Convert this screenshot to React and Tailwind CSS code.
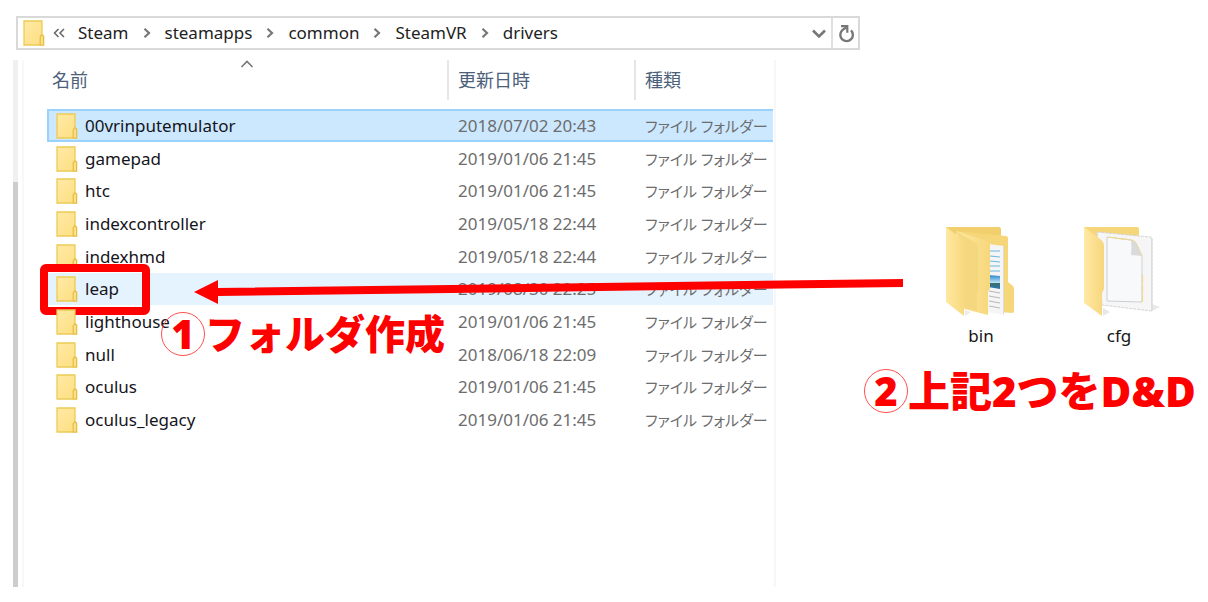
const folders = [
  { name: '00vrinputemulator', date: '2018/07/02 20:43', selected: true },
  { name: 'gamepad', date: '2019/01/06 21:45' },
  { name: 'htc', date: '2019/01/06 21:45' },
  { name: 'indexcontroller', date: '2019/05/18 22:44' },
  { name: 'indexhmd', date: '2019/05/18 22:44' },
  { name: 'leap', date: '2019/08/30 22:25', target: true },
  { name: 'lighthouse', date: '2019/01/06 21:45' },
  { name: 'null', date: '2018/06/18 22:09' },
  { name: 'oculus', date: '2019/01/06 21:45' },
  { name: 'oculus_legacy', date: '2019/01/06 21:45' },
];

const crumbs = ['Steam', 'steamapps', 'common', 'SteamVR', 'drivers'];

function FolderIcon() {
  return (
    <svg viewBox="0 0 22 26" className="block h-[26px] w-[22px] shrink-0" aria-hidden="true">
      <defs>
        <linearGradient id="folder-face" x1="0" y1="0" x2="1" y2="1">
          <stop offset="0" stopColor="#ffe9a6" />
          <stop offset="1" stopColor="#fddf80" />
        </linearGradient>
      </defs>
      <path d="M1 1h18v14l1.5 1v9H1z" fill="url(#folder-face)" stroke="#edcb55" strokeWidth="1.3" />
      <path d="M17.2 25v-8l1.6-2.4 1.8 1.6V25z" fill="#fbe08a" stroke="#e6bd45" strokeWidth="1.2" />
    </svg>
  );
}

function Chevron() {
  return (
    <svg viewBox="0 0 8 12" className="h-3 w-2 shrink-0" aria-hidden="true">
      <path d="M1.5 1.8 6 6l-4.5 4.2" fill="none" stroke="#777" strokeWidth="2.2" />
    </svg>
  );
}

function AddressBar() {
  return (
    <header className="ml-4 flex h-[34px] w-full max-w-[844px] items-stretch border-2 border-[#d9d9d9] bg-white">
      <nav aria-label="Path" className="flex min-w-0 flex-1 items-center pb-px pl-[5px]">
        <FolderIcon />
        <svg viewBox="0 0 12 12" className="ml-2 h-3 w-3 shrink-0" aria-hidden="true">
          <path d="M5.5 2 1.5 6l4 4M11 2 7 6l4 4" fill="none" stroke="#666" strokeWidth="1.5" />
        </svg>
        <ol className="ml-[13px] flex items-center gap-[14px] text-[17px] leading-6 text-[#222]">
          {crumbs.map((crumb, i) => (
            <li key={crumb} className="flex items-center gap-[14px]">
              {i > 0 && <Chevron />}
              <button type="button">{crumb}</button>
            </li>
          ))}
        </ol>
      </nav>
      <button type="button" aria-label="Recent locations" className="flex w-6 items-center justify-center">
        <svg viewBox="0 0 16 12" className="h-3 w-4" aria-hidden="true">
          <path d="m2 3.500 6 6 6-6" fill="none" stroke="#777" strokeWidth="2.600" />
        </svg>
      </button>
      <button type="button" aria-label="Refresh" className="flex w-[27px] items-center justify-center border-l-2 border-[#e0e0e0]">
        <svg viewBox="0 0 18 20" className="h-5 w-[18px]" aria-hidden="true">
          <path d="M14 7.300A6.300 6.300 0 1 1 5 7.500Q7 5.500 9.500 4.500" fill="none" stroke="#777" strokeWidth="2.400" />
          <path d="M4 3.200h6.300v6.500" fill="none" stroke="#777" strokeWidth="2.200" />
        </svg>
      </button>
    </header>
  );
}

function StepNumber({ children }) {
  return (
    <span className="flex h-11 w-11 shrink-0 items-center justify-center rounded-full border border-[#ff5050] text-[40px] leading-none">
      {children}
    </span>
  );
}

function FileTable() {
  return (
    <table className="w-full table-fixed border-separate border-spacing-0 text-left text-[17px] leading-6">
      <colgroup>
        <col />
        <col className="w-[187px]" />
        <col className="w-[139px]" />
      </colgroup>
      <thead className="text-[18px] text-[#4c607a]">
        <tr>
          <th className="relative p-0 pb-[9px] font-normal">
            <div className="flex h-10 items-center pl-[5px]">名前</div>
            <svg viewBox="0 0 14 8" className="absolute left-1/2 top-0 h-2 w-[14px] -translate-x-1/2" aria-hidden="true">
              <path d="m1.500 7 5.500-5.500L12.500 7" fill="none" stroke="#777" strokeWidth="1.600" />
            </svg>
          </th>
          <th className="p-0 pb-[9px] font-normal">
            <div className="flex h-10 items-center border-l-2 border-[#e6e6e6] pl-[9px]">更新日時</div>
          </th>
          <th className="p-0 pb-[9px] font-normal">
            <div className="flex h-10 items-center border-l-2 border-[#e6e6e6] pl-[9px]">種類</div>
          </th>
        </tr>
      </thead>
      <tbody>
        {folders.map((f) => {
          const tone = f.selected
            ? 'border-y-2 border-[#99d1ff] bg-[#cce8ff]'
            : f.target
              ? 'bg-[#e5f3ff]'
              : '';
          return (
            <tr key={f.name} className="h-[33px] nth-[3n]:h-8">
              <td className={`relative p-0 ${tone} ${f.selected ? 'border-l-2 pl-[7px]' : 'pl-[9px]'}`}>
                <div className="flex items-center gap-[7px] text-[#151520]">
                  <FolderIcon />
                  {f.name}
                </div>
                {f.target && (
                  <div className="absolute -left-[7px] -top-[9px] h-[51px] w-[110px] rounded-md border-8 border-[#ff0000]" />
                )}
                {f.target && (
                  <p className="absolute left-[114px] top-[35px] z-10 flex items-center whitespace-nowrap text-[40px] font-black leading-[52px] text-[#ff0000]">
                    <StepNumber>1</StepNumber>フォルダ作成
                  </p>
                )}
              </td>
              <td className={`whitespace-nowrap p-0 pl-[11px] text-[#6d6d6d] ${tone}`}>{f.date}</td>
              <td className={`whitespace-nowrap p-0 pl-[11px] text-[15px] text-[#6d6d6d] [font-feature-settings:'palt'] ${tone}`}>
                ファイル フォルダー
              </td>
            </tr>
          );
        })}
      </tbody>
    </table>
  );
}

function BinIcon() {
  return (
    <svg viewBox="0 0 70 92" className="h-[92px] w-[70px]" aria-hidden="true">
      <defs>
        <linearGradient id="bin-a" x1="0" x2="1">
          <stop offset="0" stopColor="#ffe8a0" />
          <stop offset="1" stopColor="#f7d77c" />
        </linearGradient>
        <linearGradient id="bin-sky" x1="0" y1="0" x2="0" y2="1">
          <stop offset="0" stopColor="#2688cc" />
          <stop offset="0.55" stopColor="#bfe2f4" />
          <stop offset="0.6" stopColor="#3c6f68" />
          <stop offset="1" stopColor="#2878b8" />
        </linearGradient>
      </defs>
      <path d="M0 0h53q2 0 2 2v8H5z" fill="#f0cf6c" />
      <path d="M10 4 60 9q2 0 2 2v44l5 4q1 1 1 3v22q0 2-2 2l-24-2z" fill="#f5d779" />
      <path d="m42 17 16 2v69l-16-3z" fill="#f5f5f5" />
      <path d="M57 19h1v69l-1-1z" fill="#ddd" />
      <path d="M44 24h10M44 29l10 1M44 34l10 1M44 39h10M44 44h10" stroke="#6db8e2" strokeWidth="1.2" />
      <path d="m42 48 12 1v13l-12-2z" fill="url(#bin-sky)" />
      <path d="m43 64 11 2m-11 3 11 2m-11 3 11 2m-11 3 11 2" stroke="#b8b8b8" strokeWidth="1" />
      <path d="m10 4 32 10q2 1 2 4v43l-2 4v23l-24-6z" fill="url(#bin-a)" />
      <path d="m10 4 18 11q4 2 4 7v40l-1 5v17l-13-3V24z" fill="#f0d277" opacity=".65" />
      <path d="m0 0 17 13q3 2 3 6v43l-2 4v23L0 75z" fill="url(#bin-a)" />
      <path d="m19 89 6-4-6-2z" fill="#ddd" opacity=".6" />
    </svg>
  );
}

function CfgIcon() {
  return (
    <svg viewBox="0 0 70 92" className="h-[92px] w-[70px] overflow-visible" aria-hidden="true">
      <defs>
        <linearGradient id="cfg-a" x1="0" x2="1">
          <stop offset="0" stopColor="#ffe9a4" />
          <stop offset="1" stopColor="#f7d67b" />
        </linearGradient>
      </defs>
      <path d="m68 84 8-4-8-3zM19 89l7-4-7-4z" fill="#e8e8e8" />
      <path d="M0 0h53q2 0 2 2v18H13z" fill="#f5d679" />
      <path d="m13 5 53 5q2 0 2 2v72l-50-6z" fill="#f6f6f6" stroke="#d4d4d4" strokeWidth="1" strokeDasharray="3 1" />
      <path d="M67 11h1.500v73H67z" fill="#dedede" />
      <path d="m23 10 24 3q3 0 5 3l6 13v46l-35-1z" fill="#f8f9fb" stroke="#cfcfcf" strokeWidth="1" />
      <path d="m24 10 23 3q3 0 5 3l6 13M58.500 48v27" fill="none" stroke="#f2d98b" strokeWidth="1.200" strokeDasharray="9 1" />
      <path d="M47 13q3 0 5 3l6 13-11-1q1-8 0-15z" fill="#dadada" />
      <path d="m0 0 16 12q4 3 4 7v43l-2 4v23L0 76z" fill="url(#cfg-a)" />
    </svg>
  );
}

export default function App() {
  return (
    <div className="min-h-screen bg-white pt-4 font-['Noto_Sans','Noto_Sans_CJK_JP',sans-serif]">
      <AddressBar />
      <main className="relative flex items-start pt-[10px]">
        <section aria-label="Files" className="ml-[13px] flex min-h-[527px] w-full max-w-[763px] shrink-0 border-r-2 border-[#f7f7f7]">
          <div className="flex w-[5px] flex-col">
            <div className="h-[122px] bg-[#f0f0f0]" />
            <div className="flex-1 bg-[#cdcdcd]" />
          </div>
          <div className="ml-1 w-[2px] bg-[#f8f8f8]" />
          <div className="ml-[23px] mr-px min-w-0 flex-1">
            <FileTable />
          </div>
        </section>
        <section aria-label="Dropped folders" className="flex min-w-0 flex-1 flex-col pl-[88px] pt-[167px]">
          <div className="ml-[82px] flex gap-[68px] text-[17px] leading-6 text-[#151515]">
            <figure className="flex w-[70px] flex-col items-center">
              <BinIcon />
              <figcaption className="mt-[5px]">bin</figcaption>
            </figure>
            <figure className="flex w-[70px] flex-col items-center">
              <CfgIcon />
              <figcaption className="mt-[5px]">cfg</figcaption>
            </figure>
          </div>
          <p className="mt-[17px] flex items-center whitespace-nowrap text-[42px] font-black leading-[52px] text-[#ff0000]">
            <StepNumber>2</StepNumber>上記2つをD&amp;D
          </p>
        </section>
        <svg viewBox="0 0 710 28" className="absolute left-[194px] top-[227px] h-7 w-[710px]" aria-hidden="true">
          <path d="M0 15 24 3v8L709 2v8L24 19v8z" fill="#ff0000" />
        </svg>
      </main>
    </div>
  );
}
